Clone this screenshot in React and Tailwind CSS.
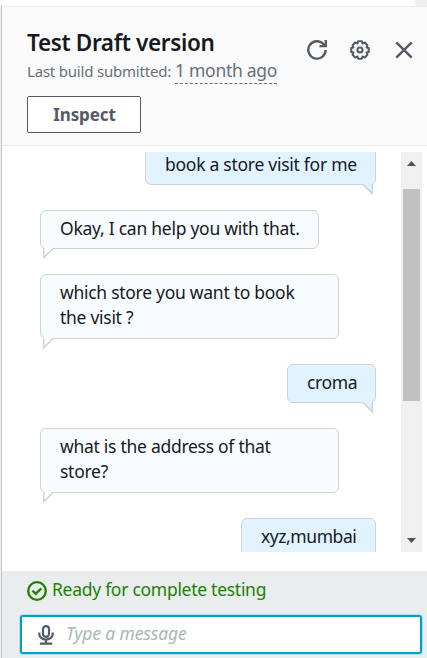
import React from "react";

function Bubble({ side, lines, size }) {
  const user = side === "user";
  return (
    <div
      className={`relative shrink-0 rounded-md border border-[#d0d3d4] pt-[5px] pb-[7px] pl-[19px] text-[17.5px] leading-[25px] whitespace-nowrap text-[#16191f] ${
        user ? "self-end bg-[#e1f3ff]" : "self-start bg-[#f8fcff]"
      } ${size}`}
    >
      {lines.map((line) => (
        <div key={line}>{line}</div>
      ))}
      <svg
        className={`absolute top-full -mt-px h-[12px] w-[11px] ${user ? "right-[2px]" : "left-[2px] -scale-x-100"}`}
        viewBox="0 0 11 12"
      >
        <path d="M0 0H10.5V10.5Z" fill={user ? "#e1f3ff" : "#ffffff"} />
        <path d="M0.5 1L10.2 10.6V1" fill="none" stroke="#d0d3d4" strokeWidth="1.5" />
      </svg>
    </div>
  );
}

const messages = [
  { side: "user", lines: ["book a store visit for me"], size: "w-[231px] tracking-[-0.27px]" },
  { side: "bot", lines: ["Okay, I can help you with that."], size: "w-[279px] tracking-[-0.26px]" },
  { side: "bot", lines: ["which store you want to book", "the visit ?"], size: "h-[65px] w-[299px] tracking-[-0.28px]" },
  { side: "user", lines: ["croma"], size: "w-[89px] tracking-[-0.4px]" },
  { side: "bot", lines: ["what is the address of that", "store?"], size: "h-[65px] w-[299px] tracking-[-0.28px]" },
  { side: "user", lines: ["xyz,mumbai"], size: "w-[135px] tracking-[-0.44px]" },
];

function Header() {
  return (
    <header className="flex h-[140px] shrink-0 justify-between border-y border-[#eaeded] bg-[#fafafa] pr-[13px] pl-[25px]">
      <div className="flex flex-col items-start pt-[22px] whitespace-nowrap">
        <h1 className="text-[22.5px] leading-[28px] font-semibold tracking-[-0.34px] text-[#16191f]">Test Draft version</h1>
        <div className="flex h-[26px] items-baseline text-[#687078]">
          <span className="w-[148px] text-[15px] leading-[26px] tracking-[-0.2px]">Last build submitted:</span>
          <span className="border-b border-dashed border-[#687078] text-[17.5px] leading-[26px] tracking-[-0.28px]">1 month ago</span>
        </div>
        <button className="mt-[13px] h-[37px] w-[114px] rounded-[2px] border border-[#545b64] bg-white pl-px text-[17px] leading-[34px] font-bold tracking-[-0.1px] text-[#545b64]">
          Inspect
        </button>
      </div>
      <div className="mt-[33px] flex h-5 items-center gap-[23px] text-[#545b64]">
        <svg className="h-5 w-5" viewBox="0 0 20 20" fill="none" stroke="currentColor" strokeWidth="2.4">
          <path d="M18.7 10A8.7 8.7 0 1 1 16.2 3.8L18.3 6" />
          <path d="M18.8 0V6.1H12.5" />
        </svg>
        <svg className="h-5 w-5" viewBox="0 0 20 20" fill="none" stroke="currentColor" strokeWidth="2.1" strokeLinejoin="round">
          <path d="M8.1 1.3H11.9L12.6 3.4L14.8 2.6L17.4 5.2L16.6 7.4L18.7 8.1V11.9L16.6 12.6L17.4 14.8L14.8 17.4L12.6 16.6L11.9 18.7H8.1L7.4 16.6L5.2 17.4L2.6 14.8L3.4 12.6L1.3 11.9V8.1L3.4 7.4L2.6 5.2L5.2 2.6L7.4 3.4Z" />
          <circle cx="10" cy="10" r="2.5" />
        </svg>
        <svg className="ml-px h-5 w-5" viewBox="0 0 20 20" fill="none" stroke="currentColor" strokeWidth="2.5">
          <path d="M2.3 2.3L17.7 17.7M17.7 2.3L2.3 17.7" />
        </svg>
      </div>
    </header>
  );
}

export default function App() {
  return (
    <div className="flex h-[658px] w-[427px] flex-col overflow-hidden bg-white font-['Noto_Sans',sans-serif]">
      <div className="flex h-[6px] shrink-0 justify-end">
        <div className="w-[12px] bg-[#f0f0f0]" />
      </div>
      <div className="flex min-h-0 flex-1">
        <div className="w-px bg-[#eef0f0]" />
        <div className="flex flex-1 flex-col border-l border-[#bfc5c7]">
          <Header />
          <main className="mt-[6px] flex h-[400px] shrink-0">
            <div className="flex w-[399px] flex-col overflow-hidden pr-[25px] pl-[38px]">
              <div className="-mt-[6px] flex flex-col gap-[25px]">
                {messages.map((m) => (
                  <Bubble key={m.lines[0]} {...m} />
                ))}
              </div>
            </div>
            <div className="flex w-[21px] flex-col items-center bg-[#f0f0f0]">
              <svg className="h-[37px] w-[9px] shrink-0" viewBox="0 0 9 37">
                <path d="M0 14L4.5 9L9 14Z" fill="#505050" />
              </svg>
              <div className="h-[212px] w-[17px] bg-[#c1c1c1]" />
              <svg className="mt-auto h-[20px] w-[9px] shrink-0" viewBox="0 0 9 20">
                <path d="M0 6L4.5 11L9 6Z" fill="#505050" />
              </svg>
            </div>
          </main>
          <footer className="mt-[19px] flex flex-1 flex-col bg-[#eaeded]">
            <div className="flex h-[44px] items-center pb-[5px] pl-[25px] text-[#1d8102]">
              <svg className="mr-[5px] h-5 w-5" viewBox="0 0 20 20" fill="none" stroke="currentColor" strokeWidth="2.3">
                <circle cx="10" cy="10" r="8.8" />
                <path d="M5.5 9.7L8.7 12.8L14.3 7.4" />
              </svg>
              <span className="pb-[2px] text-[17.5px] tracking-[-0.28px] whitespace-nowrap">Ready for complete testing</span>
            </div>
            <div className="ml-[18px] flex h-[39px] w-[402px] items-center rounded-[3px] border-2 border-[#00a1c9] bg-white pl-[16px] shadow-[0_0_0_1px_#b8dfe9]">
              <svg className="h-5 w-[16px] text-[#545b64]" viewBox="0 0 16 20" fill="none" stroke="currentColor" strokeWidth="2.2">
                <rect x="5" y="1.2" width="6" height="10.6" rx="3" />
                <path d="M1.3 7.5V9a6.7 5.6 0 0 0 13.4 0V7.5M8 14.5V18.6M1.8 18.7H14.2" />
              </svg>
              <input
                className="mb-[2px] ml-[12px] w-[300px] text-[17.5px] tracking-[-0.13px] italic outline-none placeholder:text-[#aab7b8]"
                placeholder="Type a message"
              />
            </div>
          </footer>
        </div>
      </div>
    </div>
  );
}
